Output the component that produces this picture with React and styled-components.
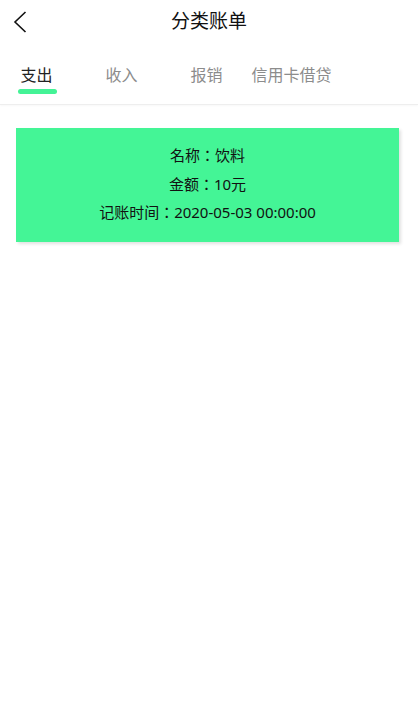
import styled, { createGlobalStyle } from 'styled-components';

const GlobalStyle = createGlobalStyle`
  body {
    margin: 0;
    background: #fff;
    font-family: "Noto Sans", "Noto Sans CJK SC", sans-serif;
  }
`;

const Page = styled.div`
  width: 418px;
  min-height: 710px;
  background: #fff;
`;

const Header = styled.div`
  position: relative;
  height: 44px;
  display: flex;
  align-items: center;
  justify-content: center;
`;

const BackButton = styled.div`
  position: absolute;
  left: 10px;
  top: 10px;
  width: 20px;
  height: 24px;
  display: flex;
  align-items: center;
  justify-content: center;
`;

const Title = styled.div`
  font-size: 19px;
  color: #111;
  line-height: 26px;
  margin-top: -2px;
`;

const TabBar = styled.div`
  display: flex;
  padding: 20px 0 10px;
  border-bottom: 1px solid #eeeeee;
  box-shadow: 0 1px 2px rgba(0, 0, 0, 0.03);
`;

const TabList = styled.div`
  display: flex;
  margin-left: -6px;
`;

const Tab = styled.div`
  width: 85px;
  display: flex;
  flex-direction: column;
  align-items: center;
  font-size: 16px;
  line-height: 22px;
  color: ${(props) => (props.active ? '#222' : '#8c8c8c')};
`;

const TabLine = styled.div`
  width: 39px;
  height: 5px;
  margin-top: 3px;
  margin-left: 2px;
  border-radius: 3px;
  background: ${(props) => (props.active ? '#44f396' : 'transparent')};
`;

const Card = styled.div`
  width: 383px;
  margin: 23px 0 0 16px;
  padding: 13px 0 15px;
  background: #44f596;
  box-shadow: 2px 2px 3px rgba(0, 0, 0, 0.12);
  display: flex;
  flex-direction: column;
  align-items: center;
`;

const CardLine = styled.div`
  font-family: "Noto Sans", "Noto Sans CJK TC", sans-serif;
  font-size: 15px;
  line-height: 28.5px;
  color: #111;
`;

const tabs = ['支出', '收入', '报销', '信用卡借贷'];

function App() {
  return (
    <Page>
      <GlobalStyle />
      <Header>
        <BackButton>
          <svg width="14" height="22" viewBox="0 0 14 22">
            <path d="M12.5 1 L2 11 L12.5 21" fill="none" stroke="#111" strokeWidth="1.6" />
          </svg>
        </BackButton>
        <Title>分类账单</Title>
      </Header>
      <TabBar>
        <TabList>
          {tabs.map((item, index) => (
            <Tab key={item} active={index === 0}>
              {item}
              <TabLine active={index === 0} />
            </Tab>
          ))}
        </TabList>
      </TabBar>
      <Card>
        <CardLine>名称：饮料</CardLine>
        <CardLine>金额：10元</CardLine>
        <CardLine>记账时间：2020-05-03 00:00:00</CardLine>
      </Card>
    </Page>
  );
}

export default App;
